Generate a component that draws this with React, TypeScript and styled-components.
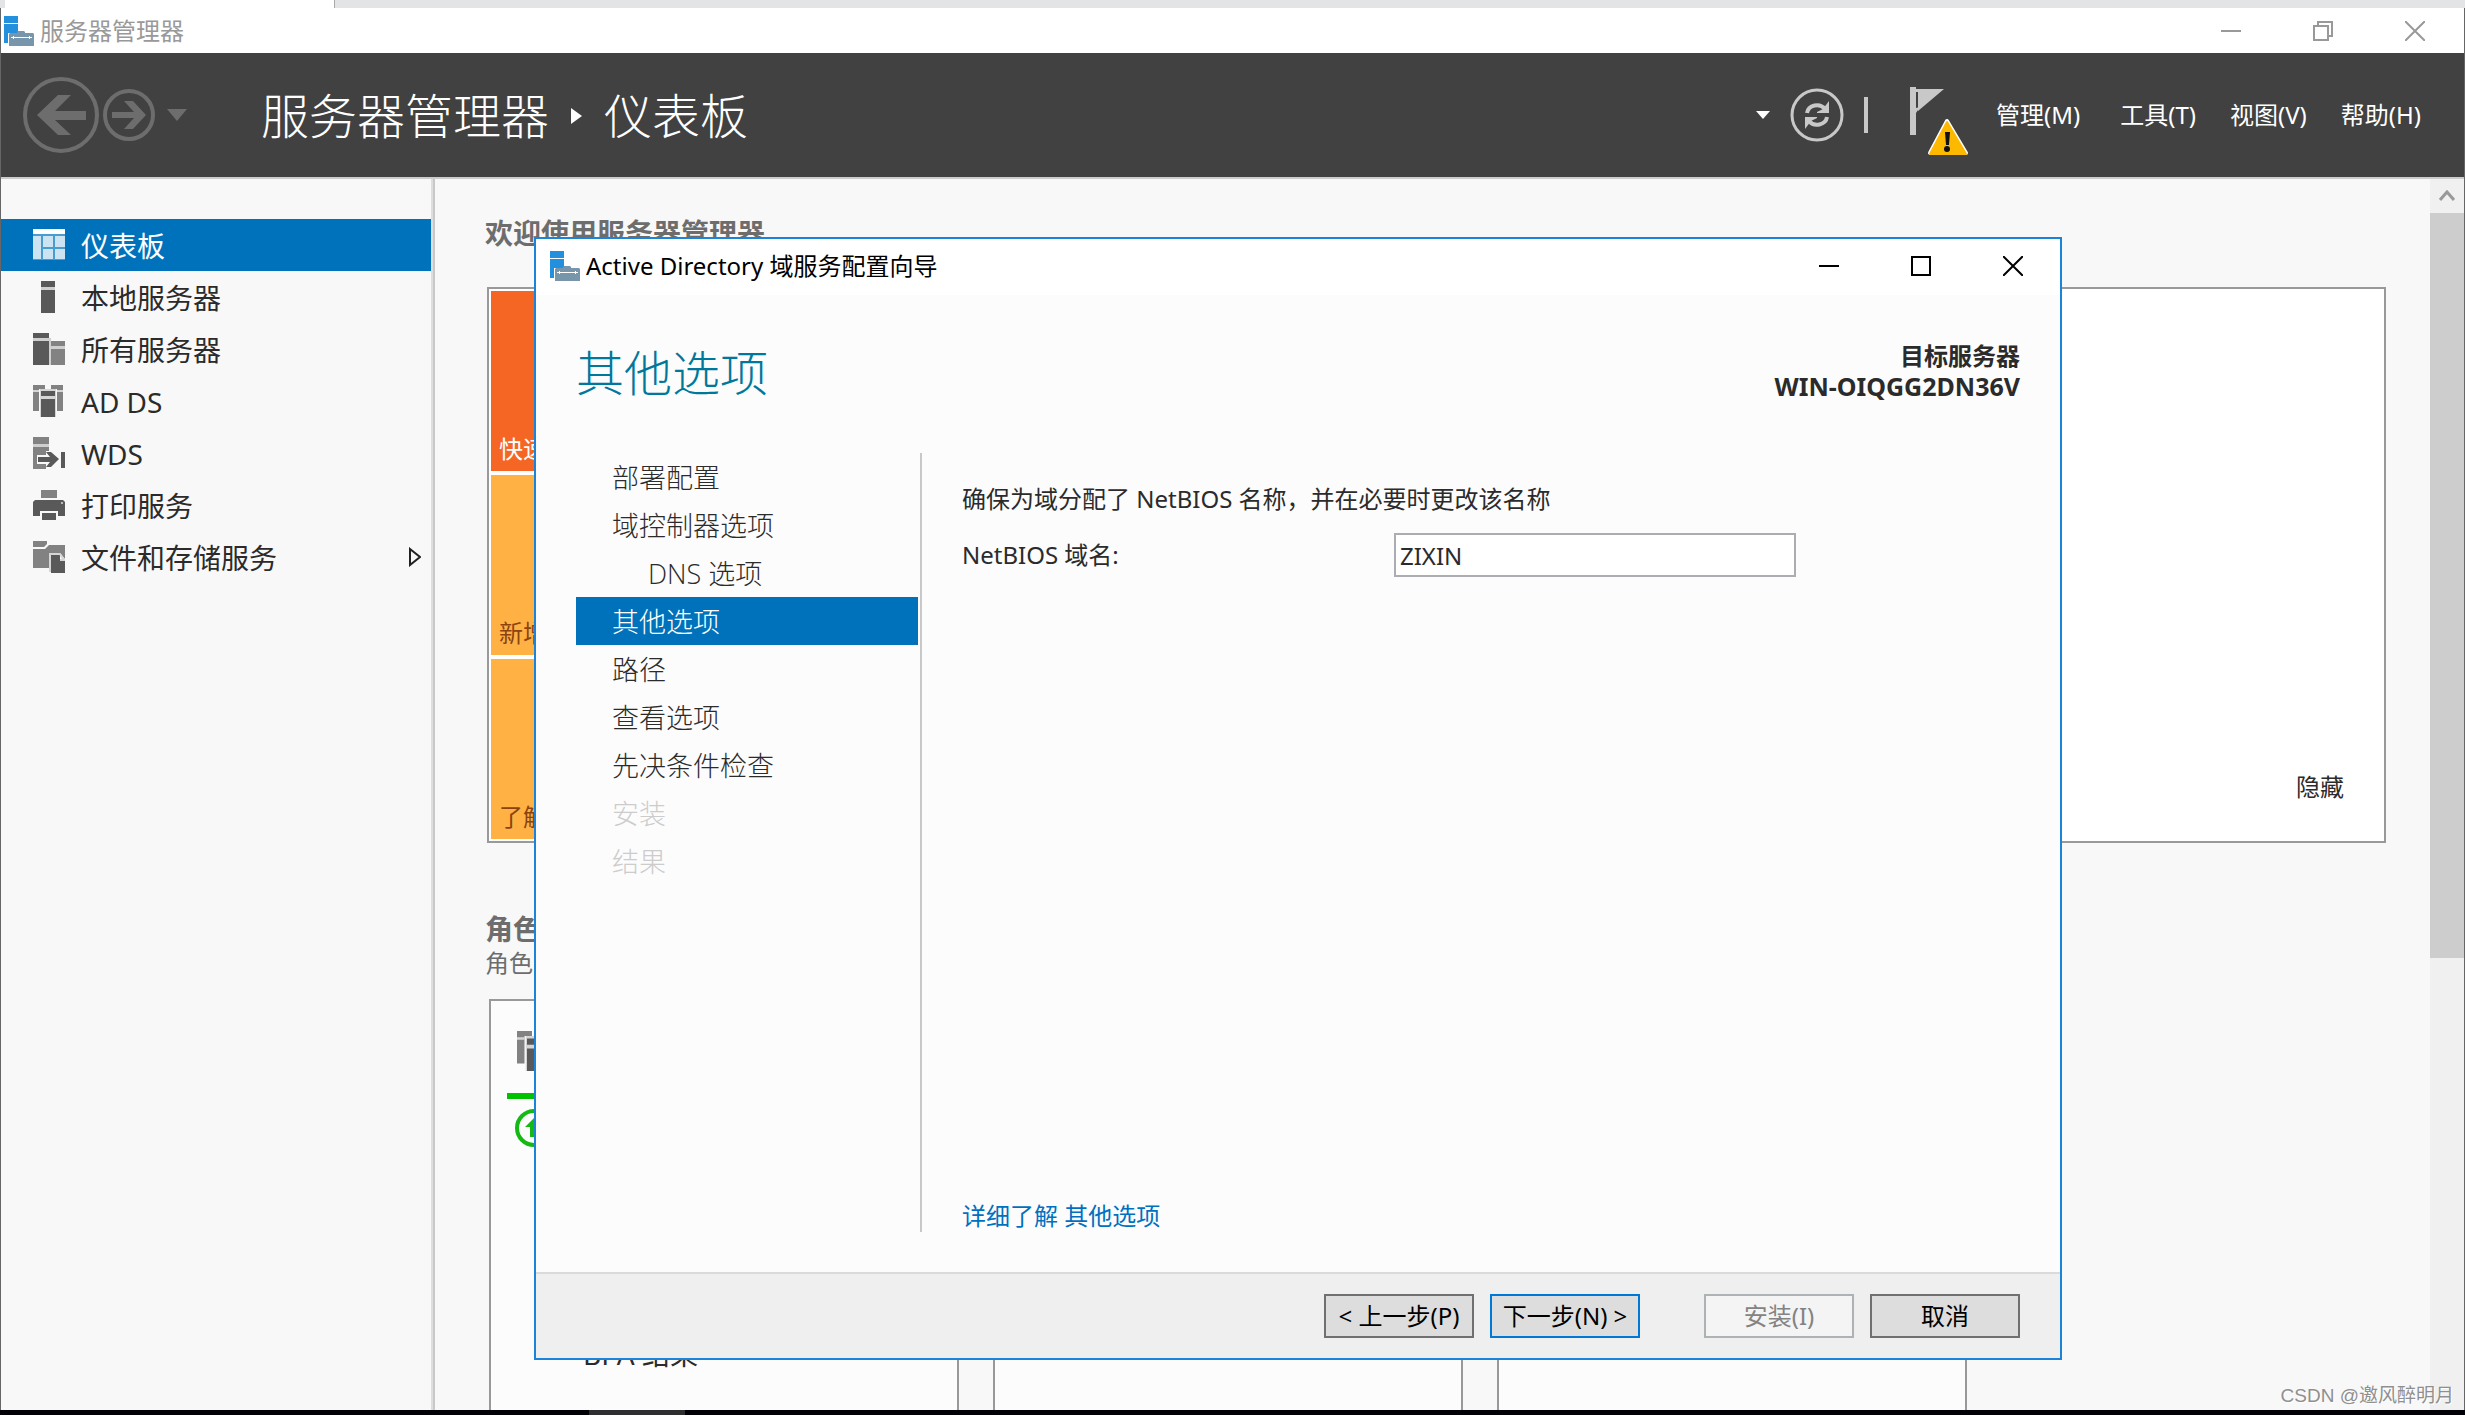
import React from "react";
import styled, { createGlobalStyle, css } from "styled-components";

const GlobalStyle = createGlobalStyle`
  *, *::before, *::after { box-sizing: border-box; }
  body {
    margin: 0;
    font-family: "Noto Sans", "Noto Sans CJK SC", sans-serif;
    font-size: 24px;
    line-height: 32px;
    color: #2b2b2b;
    background: #000;
  }
  button, input { font: inherit; color: inherit; }
  button { padding: 0; border: 0; background: none; cursor: pointer; }
  h1, h2, h3, p, ul, ol { margin: 0; padding: 0; font-weight: inherit; font-size: inherit; }
  ul, ol { list-style: none; }
  svg { display: block; flex: none; }
`;

/* ---------- desktop and main window ---------- */

const Desktop = styled.div`
  position: relative;
  display: flex;
  flex-direction: column;
  height: 100vh;
  overflow: hidden;
  background: #fff;
`;

const TabStrip = styled.div`
  flex: none;
  height: 8px;
  padding-left: 5px;
  background: #e3e4e6;
`;

const ActiveTab = styled.div`
  width: 330px;
  height: 8px;
  background: #fff;
  border-right: 1px solid #aaa;
`;

const ManagerWindow = styled.div`
  flex: 1;
  min-height: 0;
  display: flex;
  flex-direction: column;
  border: solid #666;
  border-width: 0 1px;
`;

const TitleBar = styled.header`
  flex: none;
  display: flex;
  align-items: center;
  height: 45px;
  padding: 0 39px 0 3px;
  gap: 6px;
  color: #999;
`;

const WindowControls = styled.div`
  display: flex;
  align-items: center;
  gap: 72px;
  margin-left: auto;
`;

const ControlButton = styled.button`
  display: flex;
  width: 20px;
  height: 20px;
  color: inherit;
`;

const Banner = styled.div`
  flex: none;
  display: flex;
  align-items: center;
  height: 126px;
  padding: 0 43px 0 22px;
  color: #fff;
  background: #414141;
  border-bottom: 2px solid #ccc;
`;

const History = styled.div`
  display: flex;
  align-items: center;
  gap: 4px;
  width: 238px;
`;

const IconButton = styled.button`
  display: flex;
  align-items: center;
`;

const HistoryMenuButton = styled(IconButton)`
  padding-left: 8px;
`;

const Breadcrumb = styled.h1`
  display: flex;
  align-items: center;
  gap: 22px;
  padding-top: 2px;
  font-size: 48px;
  line-height: 64px;
  font-weight: 300;
`;

const BannerTools = styled.div`
  display: flex;
  align-items: center;
  gap: 20px;
  margin-left: auto;
`;

const Divider = styled.span`
  width: 4px;
  height: 36px;
  background: #c8c8c8;
`;

const FlagButton = styled(IconButton)`
  margin: 14px 8px 0 22px;
`;

const MenuBar = styled.nav`
  display: flex;
  gap: 34px;
`;

const MenuButton = styled.button`
  &:first-child { margin-right: 6px; }
`;

const Workspace = styled.div`
  flex: 1;
  min-height: 0;
  display: flex;
  background: #f8f8f8;
`;

const Sidebar = styled.nav`
  flex: none;
  width: 434px;
  padding-top: 40px;
  border-right: 2px solid #c8c8c8;
  box-shadow: inset -2px 0 #dedede;
`;

const SideItem = styled.button<{ $active?: boolean }>`
  display: flex;
  align-items: center;
  gap: 16px;
  width: 430px;
  height: 52px;
  padding: 0 10px 0 32px;
  font-size: 28px;
  text-align: left;
  ${(p) => p.$active && css`
    color: #fff;
    background: #0072bc;
  `}
`;

const SideLabel = styled.span`
  padding-top: 2px;
`;

const Expander = styled.span`
  margin-left: auto;
`;

const Main = styled.main`
  flex: 1;
  min-width: 0;
  display: flex;
  flex-direction: column;
  padding: 34px 44px 0 50px;
`;

const SectionTitle = styled.h2`
  font-size: 28px;
  line-height: 40px;
  font-weight: 700;
  color: #6d6d6d;
`;

const SectionNote = styled.p`
  line-height: 28px;
  color: #6d6d6d;
`;

const WelcomeCard = styled.section`
  flex: none;
  display: flex;
  justify-content: space-between;
  align-items: flex-end;
  margin: 34px 0 66px 2px;
  padding: 2px;
  background: #fff;
  border: 2px solid #999;
`;

const Tiles = styled.ul`
  display: flex;
  flex-direction: column;
  gap: 4px;
  width: 320px;
`;

const Tile = styled.li<{ $hot?: boolean }>`
  display: flex;
  align-items: flex-end;
  height: 180px;
  padding: 6px 8px;
  color: ${(p) => (p.$hot ? "#fff" : "#8a4412")};
  background: ${(p) => (p.$hot ? "#f56624" : "#ffb243")};
`;

const HideButton = styled.button`
  margin: 0 38px 36px;
`;

const RoleCards = styled.div`
  flex: 1;
  display: flex;
  gap: 34px;
  margin: 22px 0 0 4px;
`;

const RoleCard = styled.article`
  display: flex;
  flex-direction: column;
  width: 470px;
  padding: 30px 16px 24px;
  background: #fcfcfc;
  border: 2px solid #999;
  border-bottom: 0;
`;

const RoleIcon = styled.div`
  padding-left: 10px;
`;

const StatusBar = styled.div`
  height: 6px;
  margin: 22px 0 10px;
  background: #00c200;
`;

const StatusIcon = styled.div`
  padding-left: 8px;
`;

const RoleLink = styled.a`
  margin: auto 0 16px 76px;
  font-size: 28px;
  color: inherit;
  text-decoration: none;
`;

const ScrollTrack = styled.div`
  flex: none;
  width: 34px;
  display: flex;
  flex-direction: column;
  background: #f0f0f0;
`;

const ScrollButton = styled.button`
  display: flex;
  align-items: center;
  justify-content: center;
  height: 34px;
`;

const ScrollThumb = styled.div`
  flex: 0 0 64%;
  background: #cdcdcd;
  max-height: 745px;
`;

const Taskbar = styled.div`
  flex: none;
  display: flex;
  height: 5px;
  padding-left: 589px;
  background: #000006;
`;

const TaskbarItem = styled.span`
  width: 96px;
  background: #2e2e31;
`;

const Watermark = styled.p`
  position: absolute;
  right: 11px;
  bottom: 3px;
  font-family: "Liberation Sans", "Noto Sans CJK SC", sans-serif;
  font-size: 19px;
  color: #8f8f8f;
  text-shadow: 1px 1px #fff;
`;

/* ---------- wizard dialog ---------- */

const Dialog = styled.section`
  position: absolute;
  inset: 237px 403px 55px 534px;
  display: flex;
  flex-direction: column;
  background: #fcfcfc;
  border: 2px solid #1c84d8;
`;

const DialogTitleBar = styled.header`
  flex: none;
  display: flex;
  align-items: center;
  gap: 6px;
  height: 56px;
  padding: 0 37px 2px 14px;
  color: #000;
  background: #fff;
`;

const DialogHeader = styled.div`
  flex: none;
  display: flex;
  justify-content: space-between;
  align-items: flex-start;
  height: 158px;
  padding: 46px 40px 0;
`;

const DialogHeading = styled.h2`
  font-size: 48px;
  line-height: 64px;
  font-weight: 300;
  color: #00789b;
`;

const Target = styled.p`
  line-height: 30px;
  font-weight: 700;
  text-align: right;
`;

const ServerName = styled.span`
  font-size: 25px;
`;

const DialogBody = styled.div`
  flex: 1;
  min-height: 0;
  display: flex;
  padding: 0 40px 40px;
`;

const Steps = styled.ol`
  flex: none;
  width: 346px;
  padding-right: 2px;
  border-right: 2px solid #c8c8c8;
`;

const Step = styled.button<{ $active?: boolean; $nested?: boolean }>`
  display: block;
  width: 100%;
  height: 48px;
  padding: 2px 0 0 ${(p) => (p.$nested ? 72 : 36)}px;
  font-family: "Open Sans", "Noto Sans CJK SC", sans-serif;
  font-size: 27px;
  font-weight: 300;
  text-align: left;
  &:disabled { color: #ccc; }
  ${(p) => p.$active && css`
    color: #fff;
    background: #0072bc;
  `}
`;

const Page = styled.div`
  flex: 1;
  display: flex;
  flex-direction: column;
  align-items: flex-start;
  padding: 30px 0 0 40px;
`;

const Field = styled.div`
  display: flex;
  align-items: center;
  margin-top: 18px;
`;

const FieldLabel = styled.label`
  width: 432px;
`;

const TextBox = styled.input`
  width: 402px;
  height: 44px;
  padding: 0 4px;
  background: #fff;
  border: 2px solid #abadb3;
  border-radius: 0;
  outline: 0;
`;

const MoreLink = styled.a`
  margin-top: auto;
  color: #0070c0;
  text-decoration: none;
`;

const DialogFooter = styled.footer`
  flex: none;
  display: flex;
  justify-content: flex-end;
  gap: 16px;
  height: 86px;
  padding: 20px 40px;
  background: #efefef;
  border-top: 2px solid #dadada;
`;

const PushButton = styled.button<{ $primary?: boolean; $apart?: boolean }>`
  width: 150px;
  height: 44px;
  margin-left: ${(p) => (p.$apart ? 48 : 0)}px;
  color: #000;
  white-space: nowrap;
  background: #ddd;
  border: 2px solid ${(p) => (p.$primary ? "#0078d7" : "#707070")};
  &:disabled {
    color: #838383;
    background: #f4f4f4;
    border-color: #adb2b5;
  }
`;

/* ---------- icons ---------- */

const AppIcon = () => (
  <svg width="30" height="30" viewBox="0 0 30 30">
    <path fill="#2290dc" d="M0 0h14v7H0zM0 8h14v19H0z" />
    <path fill="#fff" d="M4 17h26v13H4z" />
    <path fill="#7796ab" d="M5 18l1-1h23l1 1v12H5z" />
    <path fill="#7796ab" d="M13 17v-1l1-1h6l1 1v1z" />
    <path fill="#fff" d="M7 21h21v1H7zM9 20h1v3H9zM25 20h1v3h-1z" />
  </svg>
);

const MinimizeIcon = () => (
  <svg width="20" height="20"><path fill="currentColor" d="M0 9h20v2H0z" /></svg>
);

const MaximizeIcon = () => (
  <svg width="20" height="20" fill="none" stroke="currentColor" strokeWidth="2"><path d="M1 1h18v18H1z" /></svg>
);

const RestoreIcon = () => (
  <svg width="20" height="20" fill="none" stroke="currentColor" strokeWidth="2">
    <path d="M1 5h14v14H1zM5 5V1h14v14h-4" />
  </svg>
);

const CloseIcon = () => (
  <svg width="20" height="20" fill="none" stroke="currentColor" strokeWidth="2"><path d="M0 0l20 20M20 0L0 20" /></svg>
);

const BackIcon = () => (
  <svg width="76" height="76" viewBox="0 0 76 76">
    <circle cx="38" cy="38" r="36" fill="none" stroke="#6d6d6d" strokeWidth="4" />
    <path fill="#6d6d6d" d="M14 38l21-20h13L32 34h31v9H32l16 15H35z" />
  </svg>
);

const ForwardIcon = () => (
  <svg width="52" height="52" viewBox="0 0 52 52">
    <circle cx="26" cy="26" r="24" fill="none" stroke="#6d6d6d" strokeWidth="4" />
    <path fill="#6d6d6d" d="M43 26L30 12h-9l10 11H9v6h22L21 40h9z" />
  </svg>
);

const DownTriangle = ({ width, height, color }: { width: number; height: number; color: string }) => (
  <svg width={width} height={height} viewBox="0 0 20 12" preserveAspectRatio="none">
    <path fill={color} d="M0 0h20L10 12z" />
  </svg>
);

const CrumbArrow = () => (
  <svg width="11" height="16"><path fill="#fff" d="M0 0l11 8-11 8z" /></svg>
);

const RefreshIcon = () => (
  <svg width="54" height="54" viewBox="0 0 54 54">
    <circle cx="27" cy="27" r="25" fill="none" stroke="#c8c8c8" strokeWidth="3" />
    <g fill="none" stroke="#c8c8c8" strokeWidth="4">
      <path d="M17 25a10 9 0 0 1 18-4" />
      <path d="M37 29a10 9 0 0 1-18 4" />
    </g>
    <path fill="#c8c8c8" d="M39 13v12H27v-1l6-3zM15 41V29h12v1l-6 3z" />
  </svg>
);

const FlagIcon = () => (
  <svg width="58" height="70" viewBox="0 0 58 70">
    <path fill="#c8c8c8" d="M0 0h6v48H0zM8 2h26L8 24z" />
    <path fill="#c8c8c8" d="M6 2h4v3H6zM6 21l4-1-4 6z" />
    <path fill="#fff" stroke="#fff" strokeWidth="4" strokeLinejoin="round" d="M37 34L20 66h36z" />
    <path fill="#fdb900" stroke="#fdb900" strokeWidth="2" strokeLinejoin="round" d="M37 35L20 67h36z" />
    <path fill="#111" d="M35 45h5l-1 13h-3z" />
    <circle cx="37" cy="62" r="3" fill="#111" />
  </svg>
);

const DARK = "#595959";
const GRAY = "#828282";

const DashboardIcon = () => (
  <svg width="32" height="32">
    <path fill="#fff" d="M0 0h32v5H0z" />
    <path fill="#4a9bd0" d="M0 5h32v26H0z" />
    <path fill="#cce3f2" d="M0 7h8v23H0zM10 7h10v11H10zM22 7h10v11H22zM10 20h10v10H10zM22 20h10v10H22z" />
  </svg>
);

const ServerIcon = () => (
  <svg width="32" height="32">
    <path fill="#cfcfcf" d="M8 5h14v4H8z" />
    <path fill={DARK} d="M8 0h14v6H8zM8 9h14v23H8z" />
  </svg>
);

const ServersIcon = () => (
  <svg width="32" height="32">
    <path fill="#cfcfcf" d="M0 5h18v27H0zM18 8h14v8H18z" />
    <path fill={DARK} d="M0 0h16v5H0zM0 8h16v24H0z" />
    <path fill={GRAY} d="M18 8h14v5H18zM18 16h14v16H18z" />
  </svg>
);

const DomainIcon = ({ size = 32 }: { size?: number }) => (
  <svg width={size} height={size} viewBox="0 0 32 32">
    <path fill={GRAY} d="M0 0h12v4H6v22H0zM18 0h12v26h-6V4h-6z" />
    <path fill="#d5d5d5" d="M0 5h6v2H0zM24 5h6v2h-6zM7 4h16v28H7z" />
    <path fill={DARK} d="M8 6h14v5H8zM8 14h14v18H8z" />
  </svg>
);

const DeployIcon = () => (
  <svg width="32" height="32">
    <path fill={GRAY} d="M0 0h16v7H0zM0 10h16v4h-3v4H4v9h9v5H0z" />
    <path fill="#cfcfcf" d="M0 7h16v3H0z" />
    <path fill={DARK} d="M5 20h12l-4-5h5l8 7-8 8h-5l4-5H5zM28 15h4v16h-4z" />
  </svg>
);

const PrinterIcon = () => (
  <svg width="32" height="32">
    <path fill={GRAY} d="M8 1h16v8H8z" />
    <path fill={DARK} d="M2 11h28l2 2v14h-7v-5H7v5H0V13zM9 24h14v7H9z" />
    <circle cx="29" cy="14" r="1" fill="#ddd" />
  </svg>
);

const StorageIcon = () => (
  <svg width="32" height="32">
    <path fill={GRAY} d="M0 0h14v3l-3 3H0zM0 8h12l4-4h16v14l-4-5H17v14H0z" />
    <path fill={DARK} d="M18 14h9v5h5v13H18z" />
    <path fill="none" stroke="#d5d5d5" strokeWidth="2" d="M17 31V13h10l4 6h-4" />
  </svg>
);

const ExpandIcon = () => (
  <svg width="12" height="20"><path fill="none" stroke="#222" strokeWidth="2" d="M1 2l10 8-10 8z" /></svg>
);

const ScrollUpIcon = () => (
  <svg width="16" height="12"><path fill="none" stroke="#999" strokeWidth="3" d="M1 10l7-8 7 8" /></svg>
);

const OnlineIcon = () => (
  <svg width="38" height="38">
    <circle cx="19" cy="19" r="17" fill="none" stroke="#14b914" strokeWidth="4" />
    <path fill="#14b914" d="M19 9l9 9h-5v10h-8V18h-5z" />
  </svg>
);

/* ---------- data ---------- */

const servers = [
  { label: "仪表板", icon: <DashboardIcon />, active: true },
  { label: "本地服务器", icon: <ServerIcon /> },
  { label: "所有服务器", icon: <ServersIcon /> },
  { label: "AD DS", icon: <DomainIcon /> },
  { label: "WDS", icon: <DeployIcon /> },
  { label: "打印服务", icon: <PrinterIcon /> },
  { label: "文件和存储服务", icon: <StorageIcon />, expandable: true },
];

const menus = ["管理(M)", "工具(T)", "视图(V)", "帮助(H)"];

const steps = [
  { label: "部署配置" },
  { label: "域控制器选项" },
  { label: "DNS 选项", nested: true },
  { label: "其他选项", active: true },
  { label: "路径" },
  { label: "查看选项" },
  { label: "先决条件检查" },
  { label: "安装", disabled: true },
  { label: "结果", disabled: true },
];

/* ---------- composition ---------- */

const Wizard = () => (
  <Dialog role="dialog">
    <DialogTitleBar>
      <AppIcon />
      <span>Active Directory 域服务配置向导</span>
      <WindowControls>
        <ControlButton><MinimizeIcon /></ControlButton>
        <ControlButton><MaximizeIcon /></ControlButton>
        <ControlButton><CloseIcon /></ControlButton>
      </WindowControls>
    </DialogTitleBar>
    <DialogHeader>
      <DialogHeading>其他选项</DialogHeading>
      <Target>
        目标服务器
        <br />
        <ServerName>WIN-OIQGG2DN36V</ServerName>
      </Target>
    </DialogHeader>
    <DialogBody>
      <Steps>
        {steps.map((s) => (
          <li key={s.label}>
            <Step $active={s.active} $nested={s.nested} disabled={s.disabled}>{s.label}</Step>
          </li>
        ))}
      </Steps>
      <Page>
        <p>确保为域分配了 NetBIOS 名称，并在必要时更改该名称</p>
        <Field>
          <FieldLabel htmlFor="netbios">NetBIOS 域名:</FieldLabel>
          <TextBox id="netbios" type="text" defaultValue="ZIXIN" />
        </Field>
        <MoreLink href="#more">详细了解 其他选项</MoreLink>
      </Page>
    </DialogBody>
    <DialogFooter>
      <PushButton>&lt; 上一步(P)</PushButton>
      <PushButton $primary>下一步(N) &gt;</PushButton>
      <PushButton $apart disabled>安装(I)</PushButton>
      <PushButton>取消</PushButton>
    </DialogFooter>
  </Dialog>
);

export default function App() {
  return (
    <>
      <GlobalStyle />
      <Desktop>
        <TabStrip><ActiveTab /></TabStrip>
        <ManagerWindow>
          <TitleBar>
            <AppIcon />
            <span>服务器管理器</span>
            <WindowControls>
              <ControlButton><MinimizeIcon /></ControlButton>
              <ControlButton><RestoreIcon /></ControlButton>
              <ControlButton><CloseIcon /></ControlButton>
            </WindowControls>
          </TitleBar>
          <Banner>
            <History>
              <IconButton><BackIcon /></IconButton>
              <IconButton><ForwardIcon /></IconButton>
              <HistoryMenuButton>
                <DownTriangle width={20} height={12} color="#6d6d6d" />
              </HistoryMenuButton>
            </History>
            <Breadcrumb>
              <span>服务器管理器</span>
              <CrumbArrow />
              <span>仪表板</span>
            </Breadcrumb>
            <BannerTools>
              <IconButton><DownTriangle width={14} height={8} color="#fff" /></IconButton>
              <IconButton><RefreshIcon /></IconButton>
              <Divider />
              <FlagButton><FlagIcon /></FlagButton>
              <MenuBar>
                {menus.map((m) => <MenuButton key={m}>{m}</MenuButton>)}
              </MenuBar>
            </BannerTools>
          </Banner>
          <Workspace>
            <Sidebar>
              {servers.map((s) => (
                <SideItem key={s.label} $active={s.active}>
                  {s.icon}
                  <SideLabel>{s.label}</SideLabel>
                  {s.expandable && <Expander><ExpandIcon /></Expander>}
                </SideItem>
              ))}
            </Sidebar>
            <Main>
              <SectionTitle>欢迎使用服务器管理器</SectionTitle>
              <WelcomeCard>
                <Tiles>
                  <Tile $hot>快速</Tile>
                  <Tile>新增</Tile>
                  <Tile>了解</Tile>
                </Tiles>
                <HideButton>隐藏</HideButton>
              </WelcomeCard>
              <SectionTitle>角色</SectionTitle>
              <SectionNote>角色</SectionNote>
              <RoleCards>
                <RoleCard>
                  <RoleIcon><DomainIcon size={40} /></RoleIcon>
                  <StatusBar />
                  <StatusIcon><OnlineIcon /></StatusIcon>
                  <RoleLink href="#bpa">BPA 结果</RoleLink>
                </RoleCard>
                <RoleCard />
                <RoleCard />
              </RoleCards>
            </Main>
            <ScrollTrack>
              <ScrollButton><ScrollUpIcon /></ScrollButton>
              <ScrollThumb />
            </ScrollTrack>
          </Workspace>
        </ManagerWindow>
        <Taskbar><TaskbarItem /></Taskbar>
        <Wizard />
        <Watermark>CSDN @邀风醉明月</Watermark>
      </Desktop>
    </>
  );
}
